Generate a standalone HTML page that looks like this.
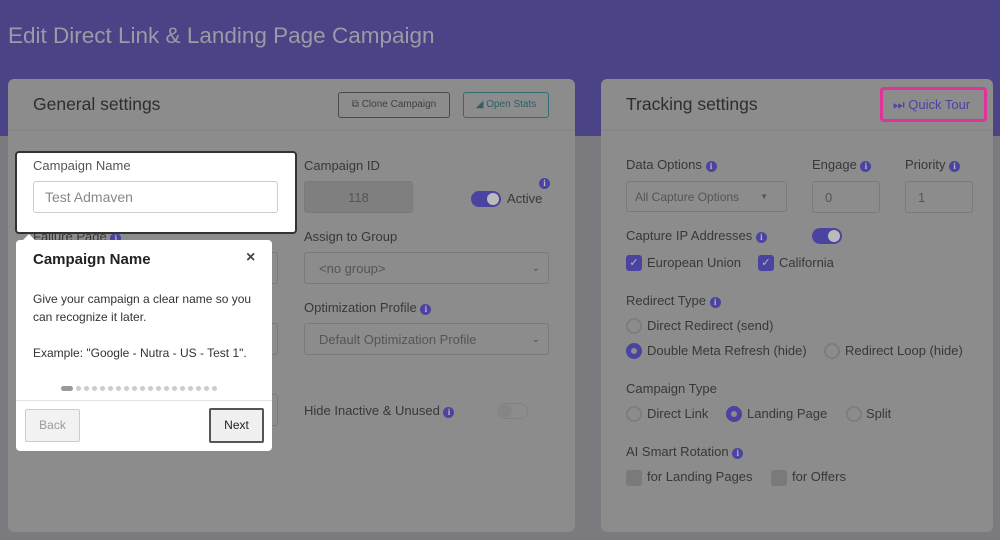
<!DOCTYPE html>
<html><head><style>
*{margin:0;padding:0;box-sizing:border-box}
body{width:1000px;height:540px;overflow:hidden;background:#7b7b7f;font-family:"Liberation Sans",sans-serif;position:relative;color:#333}
.a{position:absolute}
.band{left:0;top:0;width:1000px;height:136px;background:#4a4385}
.card{background:#8c8c8c;border-radius:6px}
.lbl{font-size:13px;color:#383838;white-space:nowrap}
.i{display:inline-block;width:11px;height:11px;border-radius:50%;background:#4b43a0;color:#bbb;font-size:9px;line-height:11px;text-align:center;font-weight:bold;vertical-align:0;font-family:"Liberation Serif",serif}
.inp{border:1px solid #7a7a7a;border-radius:3px;font-size:13px;color:#555;padding-left:8px;display:flex;align-items:center}
.rad{width:16px;height:16px;border-radius:50%;border:2px solid #7d7d7d}
.rad.on{border:5px solid #4b43a0;background:#8c8c8c}
.chk{width:16px;height:16px;border-radius:3px;background:#4b43a0;color:#bbb;font-size:11px;text-align:center;line-height:16px}
.chk.off{background:#7a7a7a}
.tog{width:30px;height:16px;border-radius:8px;background:#4b43a0}
.tog::after{content:"";position:absolute;right:2px;top:2px;width:12px;height:12px;border-radius:50%;background:#bbb}
</style></head><body>
<div class="a band"></div>
<div class="a" style="left:8px;top:23px;font-size:22.5px;color:#9a9aa8">Edit Direct Link &amp; Landing Page Campaign</div>

<div class="a card" style="left:8px;top:79px;width:567px;height:453px"></div>
<div class="a" style="left:8px;top:130px;width:567px;height:1px;background:#858585"></div>
<div class="a" style="left:33px;top:94px;font-size:17.5px;color:#2e2e2e">General settings</div>
<div class="a" style="left:338px;top:92px;width:112px;height:26px;border:1px solid #4a4a4a;border-radius:3px;font-size:10px;color:#404040;line-height:24px;text-align:center">⧉ Clone Campaign</div>
<div class="a" style="left:463px;top:92px;width:86px;height:26px;border:1px solid #2f6e76;border-radius:3px;font-size:10px;color:#2d5e6a;line-height:24px;text-align:center">◢ Open Stats</div>

<div class="a lbl" style="left:304px;top:158px">Campaign ID</div>
<div class="a inp" style="left:304px;top:181px;width:109px;height:32px;background:#7f7f7f;justify-content:center;padding:0">118</div>
<div class="a tog" style="left:471px;top:191px"></div>
<div class="a lbl" style="left:507px;top:191px">Active</div>
<div class="a i" style="left:539px;top:178px">i</div>
<div class="a lbl" style="left:304px;top:229px">Assign to Group</div>
<div class="a inp" style="left:304px;top:252px;width:245px;height:32px;padding-left:14px">&lt;no group&gt;<span style="margin-left:auto;margin-right:8px;font-size:10px">⌄</span></div>
<div class="a lbl" style="left:304px;top:300px">Optimization Profile <span class="i">i</span></div>
<div class="a inp" style="left:304px;top:323px;width:245px;height:32px;padding-left:14px">Default Optimization Profile<span style="margin-left:auto;margin-right:8px;font-size:10px">⌄</span></div>
<div class="a lbl" style="left:304px;top:403px">Hide Inactive &amp; Unused <span class="i">i</span></div>
<div class="a" style="left:498px;top:403px;width:30px;height:16px;border-radius:8px;border:1px solid #808080"><div style="width:12px;height:12px;border-radius:50%;background:#858585;margin:1px"></div></div>
<div class="a lbl" style="left:33px;top:229px">Failure Page <span class="i">i</span></div>
<div class="a inp" style="left:250px;top:252px;width:28px;height:32px"></div>
<div class="a inp" style="left:250px;top:323px;width:28px;height:32px"></div>
<div class="a inp" style="left:250px;top:394px;width:28px;height:32px"></div>

<div class="a" style="left:15px;top:151px;width:282px;height:83px;background:#fff;border:2px solid #333;border-radius:4px"></div>
<div class="a lbl" style="left:33px;top:158px;color:#555">Campaign Name</div>
<div class="a inp" style="left:33px;top:181px;width:245px;height:32px;border-color:#ccc;padding-left:11px;color:#888;font-size:14px">Test Admaven</div>

<div class="a" style="left:16px;top:240px;width:256px;height:211px;background:#fff;border-radius:4px"></div>
<div class="a" style="left:22px;top:234px;width:0;height:0;border-left:7px solid transparent;border-right:7px solid transparent;border-bottom:7px solid #fff"></div>
<div class="a" style="left:33px;top:251px;font-size:15px;font-weight:bold;color:#222">Campaign Name</div>
<div class="a" style="left:246px;top:249px;font-size:16px;font-weight:bold;color:#444">×</div>
<div class="a" style="left:33px;top:290px;font-size:12px;line-height:18px;color:#333;width:230px">Give your campaign a clear name so you can recognize it later.<br><br>Example: "Google - Nutra - US - Test 1".</div>
<div class="a" style="left:61px;top:386px;display:flex;gap:3px;align-items:center">
<span style="width:12px;height:5px;border-radius:3px;background:#999"></span>
<span style="width:5px;height:5px;border-radius:50%;background:#ccc"></span><span style="width:5px;height:5px;border-radius:50%;background:#ccc"></span><span style="width:5px;height:5px;border-radius:50%;background:#ccc"></span><span style="width:5px;height:5px;border-radius:50%;background:#ccc"></span><span style="width:5px;height:5px;border-radius:50%;background:#ccc"></span><span style="width:5px;height:5px;border-radius:50%;background:#ccc"></span><span style="width:5px;height:5px;border-radius:50%;background:#ccc"></span><span style="width:5px;height:5px;border-radius:50%;background:#ccc"></span><span style="width:5px;height:5px;border-radius:50%;background:#ccc"></span><span style="width:5px;height:5px;border-radius:50%;background:#ccc"></span><span style="width:5px;height:5px;border-radius:50%;background:#ccc"></span><span style="width:5px;height:5px;border-radius:50%;background:#ccc"></span><span style="width:5px;height:5px;border-radius:50%;background:#ccc"></span><span style="width:5px;height:5px;border-radius:50%;background:#ccc"></span><span style="width:5px;height:5px;border-radius:50%;background:#ccc"></span><span style="width:5px;height:5px;border-radius:50%;background:#ccc"></span><span style="width:5px;height:5px;border-radius:50%;background:#ccc"></span><span style="width:5px;height:5px;border-radius:50%;background:#ccc"></span>
</div>
<div class="a" style="left:16px;top:400px;width:256px;height:1px;background:#e4e4e4"></div>
<div class="a" style="left:25px;top:409px;width:55px;height:33px;border:1px solid #ccc;background:#f2f2f2;font-size:12px;color:#999;line-height:31px;text-align:center;border-radius:2px">Back</div>
<div class="a" style="left:209px;top:408px;width:55px;height:35px;border:2px solid #555;background:#f0f0f0;font-size:12px;color:#222;line-height:31px;text-align:center;border-radius:2px">Next</div>

<div class="a card" style="left:601px;top:79px;width:392px;height:453px"></div>
<div class="a" style="left:601px;top:130px;width:392px;height:1px;background:#858585"></div>
<div class="a" style="left:626px;top:94px;font-size:17.5px;color:#2e2e2e">Tracking settings</div>
<div class="a" style="left:880px;top:87px;width:107px;height:35px;border:3px solid #e0339a;border-radius:4px;font-size:13px;color:#4b43a0;padding:7px 0 0 10px">⏭ Quick Tour</div>
<div class="a lbl" style="left:626px;top:157px">Data Options <span class="i">i</span></div>
<div class="a lbl" style="left:812px;top:157px">Engage <span class="i">i</span></div>
<div class="a lbl" style="left:905px;top:157px">Priority <span class="i">i</span></div>
<div class="a inp" style="left:626px;top:181px;width:161px;height:31px;font-size:12px">All Capture Options<span style="margin-left:auto;margin-right:18px;font-size:8px">▼</span></div>
<div class="a inp" style="left:812px;top:181px;width:68px;height:32px;padding-left:12px">0</div>
<div class="a inp" style="left:905px;top:181px;width:68px;height:32px;padding-left:12px">1</div>
<div class="a lbl" style="left:626px;top:228px">Capture IP Addresses <span class="i">i</span></div>
<div class="a tog" style="left:812px;top:228px"></div>
<div class="a chk" style="left:626px;top:255px">✓</div><div class="a lbl" style="left:647px;top:255px">European Union</div>
<div class="a chk" style="left:758px;top:255px">✓</div><div class="a lbl" style="left:779px;top:255px">California</div>
<div class="a lbl" style="left:626px;top:293px">Redirect Type <span class="i">i</span></div>
<div class="a rad" style="left:626px;top:318px"></div><div class="a lbl" style="left:647px;top:318px">Direct Redirect (send)</div>
<div class="a rad on" style="left:626px;top:343px"></div><div class="a lbl" style="left:647px;top:343px">Double Meta Refresh (hide)</div>
<div class="a rad" style="left:824px;top:343px"></div><div class="a lbl" style="left:845px;top:343px">Redirect Loop (hide)</div>
<div class="a lbl" style="left:626px;top:381px">Campaign Type</div>
<div class="a rad" style="left:626px;top:406px"></div><div class="a lbl" style="left:647px;top:406px">Direct Link</div>
<div class="a rad on" style="left:726px;top:406px"></div><div class="a lbl" style="left:747px;top:406px">Landing Page</div>
<div class="a rad" style="left:846px;top:406px"></div><div class="a lbl" style="left:866px;top:406px">Split</div>
<div class="a lbl" style="left:626px;top:444px">AI Smart Rotation <span class="i">i</span></div>
<div class="a chk off" style="left:626px;top:470px"></div><div class="a lbl" style="left:647px;top:469px">for Landing Pages</div>
<div class="a chk off" style="left:771px;top:470px"></div><div class="a lbl" style="left:792px;top:469px">for Offers</div>
</body></html>
